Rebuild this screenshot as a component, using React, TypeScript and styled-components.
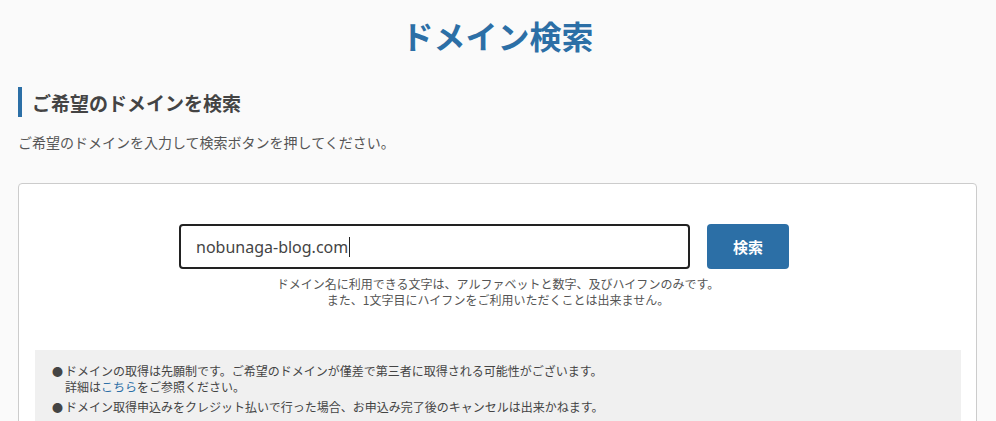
import React from "react";
import styled, { createGlobalStyle } from "styled-components";

const Global = createGlobalStyle`
  html, body { margin: 0; padding: 0; background: #fafafa; }
  body {
    font-family: "Noto Sans", "Noto Sans CJK JP", sans-serif;
    color: #444;
  }
  * { box-sizing: border-box; }
`;

const Page = styled.div`
  padding: 0 19px 0 18px;
`;

const Title = styled.h1`
  margin: 0;
  padding-top: 12px;
  text-align: center;
  font-family: "Noto Sans CJK JP", sans-serif;
  font-size: 32px;
  line-height: 46px;
  font-weight: 700;
  color: #2c6fa6;
`;

const SectionHeading = styled.h2`
  margin: 29px 0 0;
  border-left: 4px solid #2c6fa6;
  padding-left: 10px;
  height: 30px;
  display: flex;
  align-items: center;
  font-family: "Noto Sans CJK JP", sans-serif;
  font-size: 19px;
  font-weight: 700;
  color: #444;
`;

const Lead = styled.p`
  margin: 15px 0 0;
  font-family: "Noto Sans CJK JP", sans-serif;
  font-size: 14px;
  line-height: 20px;
  color: #555;
`;

const Card = styled.section`
  margin-top: 31px;
  background: #fff;
  border: 1px solid #ccc;
  border-radius: 4px;
  padding: 40px 15px 0 16px;
`;

const FormRow = styled.div`
  display: flex;
  justify-content: center;
  gap: 17px;
  padding-right: 28px;
`;

const Field = styled.div`
  width: 511px;
  height: 45px;
  border: 2px solid #222;
  border-radius: 4px;
  background: #fff;
  display: flex;
  align-items: center;
  padding-left: 15px;
  font-family: "Noto Sans", sans-serif;
  font-size: 16px;
  color: #444;
`;

const Caret = styled.span`
  display: inline-block;
  width: 1px;
  height: 20px;
  background: #222;
  margin-left: 1px;
`;

const SearchButton = styled.button`
  width: 82px;
  height: 45px;
  border: none;
  border-radius: 4px;
  background: #2c6fa6;
  color: #fff;
  font-family: "Noto Sans CJK JP", sans-serif;
  font-size: 15px;
  font-weight: 700;
  cursor: pointer;
`;

const Hint = styled.div`
  margin-top: 7px;
  display: flex;
  flex-direction: column;
  align-items: center;
  font-family: "Noto Sans CJK JP", sans-serif;
  font-size: 12px;
  line-height: 16px;
  color: #555;
`;

const HintLine = styled.p`
  margin: 0;
`;

const Notice = styled.ul`
  margin: 42px 0 0;
  list-style: none;
  background: #f0f0f0;
  padding: 13px 17px 10px;
`;

const NoticeItem = styled.li`
  display: flex;
  gap: 3px;
  font-family: "Noto Sans CJK JP", sans-serif;
  font-size: 12px;
  line-height: 16px;
  color: #444;
  & + & { margin-top: 4px; }
`;

const Bullet = styled.span`
  flex: none;
  width: 10px;
  font-size: 11px;
`;

const Link = styled.a`
  color: #2c6fa6;
  text-decoration: none;
`;

export default function App() {
  return (
    <>
      <Global />
      <Page>
        <Title>ドメイン検索</Title>
        <SectionHeading>ご希望のドメインを検索</SectionHeading>
        <Lead>ご希望のドメインを入力して検索ボタンを押してください。</Lead>
        <Card>
          <FormRow>
            <Field role="textbox">
              nobunaga-blog.com
              <Caret />
            </Field>
            <SearchButton>検索</SearchButton>
          </FormRow>
          <Hint>
            <HintLine>ドメイン名に利用できる文字は、アルファベットと数字、及びハイフンのみです。</HintLine>
            <HintLine>また、1文字目にハイフンをご利用いただくことは出来ません。</HintLine>
          </Hint>
          <Notice>
            <NoticeItem>
              <Bullet>●</Bullet>
              <span>
                ドメインの取得は先願制です。ご希望のドメインが僅差で第三者に取得される可能性がございます。
                <br />
                詳細は<Link href="#">こちら</Link>をご参照ください。
              </span>
            </NoticeItem>
            <NoticeItem>
              <Bullet>●</Bullet>
              <span>ドメイン取得申込みをクレジット払いで行った場合、お申込み完了後のキャンセルは出来かねます。</span>
            </NoticeItem>
          </Notice>
        </Card>
      </Page>
    </>
  );
}
